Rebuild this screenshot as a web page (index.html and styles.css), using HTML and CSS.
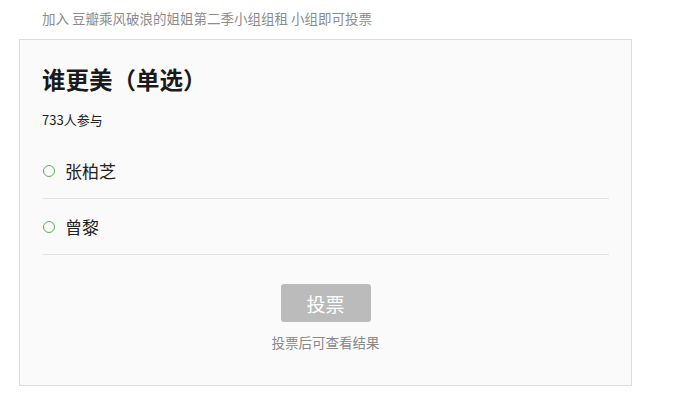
FILE: index.html
```html
<!DOCTYPE html>
<html lang="zh-CN">
<head>
  <meta charset="UTF-8">
  <meta name="viewport" content="width=device-width, initial-scale=1.0">
  <title>谁更美（单选）</title>
  <link rel="stylesheet" href="styles.css">
</head>
<body>
  <div class="page">
    <div class="join-tip">加入 豆瓣乘风破浪的姐姐第二季小组组租 小组即可投票</div>
    <div class="poll-card">
      <h1 class="poll-title">谁更美（单选）</h1>
      <div class="poll-count">733人参与</div>
      <ul class="poll-options">
        <li class="poll-option"><span class="radio"></span><span class="option-text">张柏芝</span></li>
        <li class="poll-option"><span class="radio"></span><span class="option-text">曾黎</span></li>
      </ul>
      <div class="poll-actions">
        <button class="vote-btn" disabled>投票</button>
        <div class="vote-hint">投票后可查看结果</div>
      </div>
    </div>
  </div>
</body>
</html>
```

FILE: styles.css
```css
body {
  margin: 0;
  padding: 0;
  background: #fff;
  font-family: "Noto Sans CJK SC", "Liberation Sans", sans-serif;
  color: #111;
}

.page {
  padding: 8px 0 0 19px;
  width: 613px;
}

.join-tip {
  padding-left: 23px;
  font-size: 13.5px;
  line-height: 20px;
  color: #8c8c8c;
  margin-bottom: 11px;
}

.poll-card {
  background: #fafafa;
  border: 1px solid #dcdcdc;
  padding: 22px 22px 33px;
}

.poll-title {
  margin: 0;
  font-size: 23.5px;
  line-height: 34px;
  font-weight: 700;
  color: #1a1a1a;
}

.poll-count {
  margin-top: 15px;
  font-size: 13px;
  line-height: 18px;
  color: #222;
}

.poll-options {
  list-style: none;
  margin: 14px 0 0;
  padding: 0;
}

.poll-option {
  display: flex;
  align-items: center;
  height: 55px;
  border-bottom: 1px solid #e3e3e3;
}

.radio {
  width: 10px;
  height: 10px;
  border: 1.5px solid #5fae62;
  border-radius: 50%;
  margin-right: 10px;
  margin-left: 1px;
}

.option-text {
  font-size: 17px;
  color: #222;
}

.poll-actions {
  display: flex;
  flex-direction: column;
  align-items: center;
  margin-top: 29px;
}

.vote-btn {
  width: 90px;
  height: 38px;
  border: none;
  border-radius: 3px;
  background: #bbbbbb;
  color: #fff;
  font-family: inherit;
  font-size: 19px;
  padding: 0;
}

.vote-hint {
  margin-top: 10px;
  font-size: 13.5px;
  line-height: 20px;
  color: #888;
}
```
